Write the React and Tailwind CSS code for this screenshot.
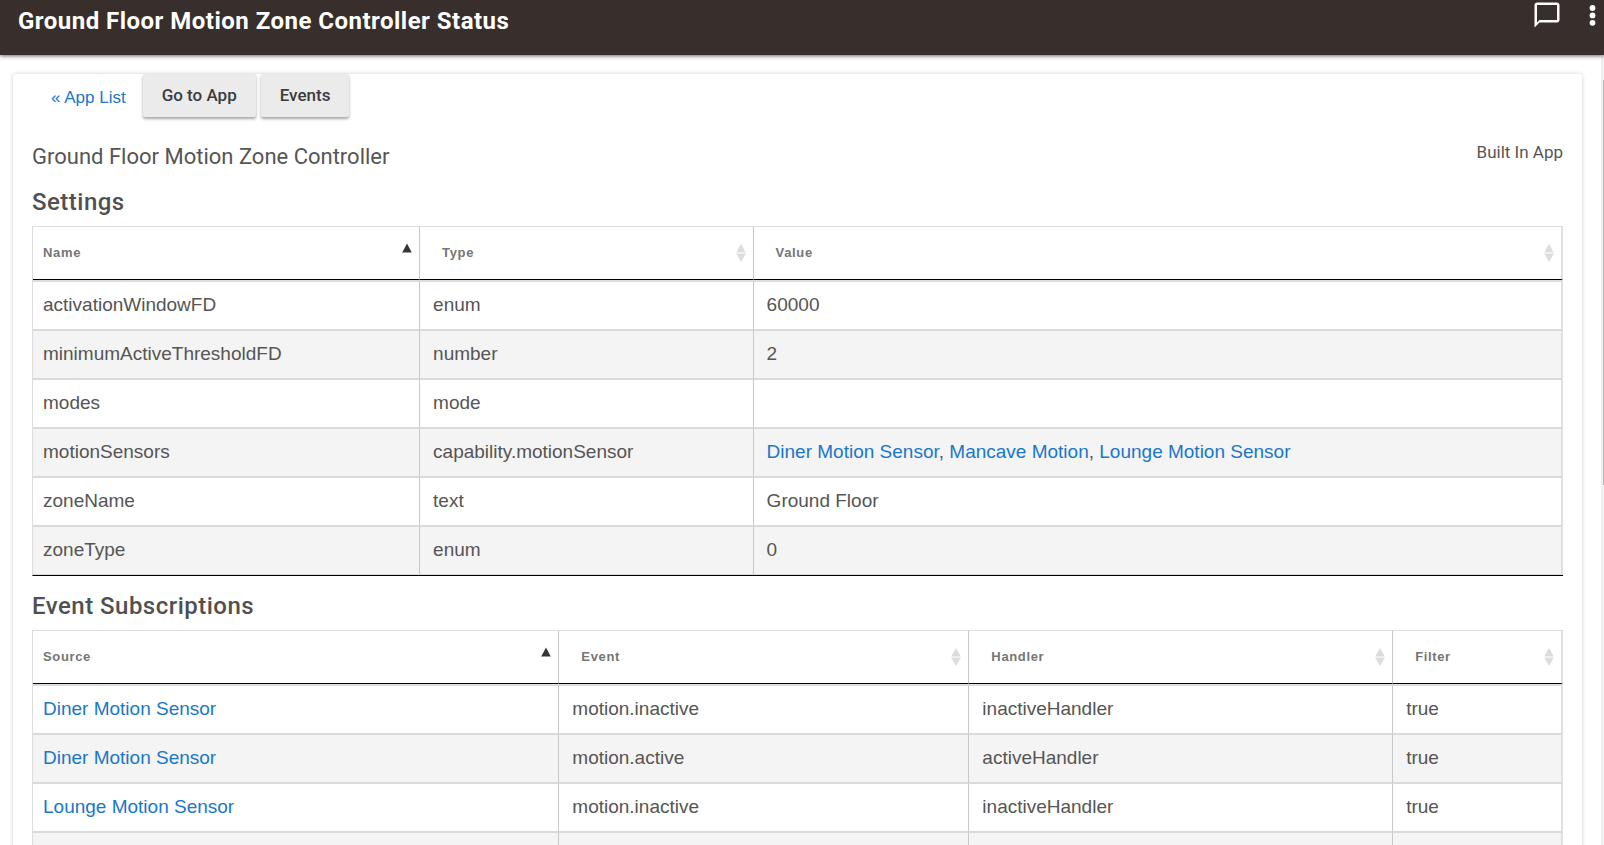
import { MdChatBubbleOutline } from "react-icons/md";

const settings = [
  { name: "activationWindowFD", type: "enum", value: "60000" },
  { name: "minimumActiveThresholdFD", type: "number", value: "2" },
  { name: "modes", type: "mode", value: "" },
  {
    name: "motionSensors",
    type: "capability.motionSensor",
    devices: ["Diner Motion Sensor", "Mancave Motion", "Lounge Motion Sensor"],
  },
  { name: "zoneName", type: "text", value: "Ground Floor" },
  { name: "zoneType", type: "enum", value: "0" },
];

const subscriptions = [
  { id: 1, source: "Diner Motion Sensor", event: "motion.inactive", handler: "inactiveHandler", filter: "true" },
  { id: 2, source: "Diner Motion Sensor", event: "motion.active", handler: "activeHandler", filter: "true" },
  { id: 3, source: "Lounge Motion Sensor", event: "motion.inactive", handler: "inactiveHandler", filter: "true" },
  { id: 4 },
];

const MoreIcon = () => (
  <svg width="22" height="30" viewBox="0 0 22 30" fill="currentColor" aria-hidden="true">
    <circle cx="10.5" cy="8" r="2.9" />
    <circle cx="10.5" cy="15.4" r="2.9" />
    <circle cx="10.5" cy="22.8" r="2.9" />
  </svg>
);

const SortIcon = ({ sorted }) => (
  <svg width="10" height="20" viewBox="0 0 10 20" aria-hidden="true">
    {sorted ? (
      <path d="M5 0.5 L9.8 9.5 H0.2 Z" fill="#32373b" />
    ) : (
      <path d="M5 1 L9.8 9.5 H0.2 Z M0.2 10.5 H9.8 L5 19 Z" fill="#dadddf" />
    )}
  </svg>
);

const HeadCell = ({ label, width, sorted }) => (
  <th
    scope="col"
    className={`${width} h-[53px] p-0 border-b border-b-black border-r border-r-[#c8c8c8] last:border-r-2 last:border-r-[#e0e0e0]`}
  >
    <button
      className={`w-full flex items-center justify-between pr-[7px] text-[13px] font-bold tracking-wider text-[#757575] ${sorted ? "pl-[10px]" : "pl-[22px]"}`}
    >
      {label}
      <SortIcon sorted={sorted} />
    </button>
  </th>
);

const Cell = ({ children }) => (
  <td className="h-[49px] group-first:h-[51px] group-last:h-12 group-first:border-t-2 border-t-[#dddddd] pt-0 pb-[2px] pl-[13px] first:pl-[10px] border-b-2 group-last:border-b border-b-[#dadada] border-r border-r-[#c8c8c8] last:border-r-2 last:border-r-[#e0e0e0]">
    {children}
  </td>
);

const Row = ({ children }) => (
  <tr className="group even:bg-[#f4f4f4]">{children}</tr>
);

const DeviceLink = ({ name }) => (
  <a href="#" className="text-[#1a77c9]">{name}</a>
);

const DataTable = ({ columns, children }) => (
  <table className="w-full table-fixed border-separate border-spacing-0 border-t border-l border-[#dddddd] border-b border-b-black text-left text-[19px] leading-5 text-[#555555]">
    <thead>
      <tr>
        {columns.map((column, i) => (
          <HeadCell key={column.label} {...column} sorted={i === 0} />
        ))}
      </tr>
    </thead>
    <tbody>{children}</tbody>
  </table>
);

const SectionTitle = ({ children }) => (
  <h3 className="mb-2 font-[Roboto,sans-serif] text-2xl font-medium tracking-[0.02em] text-[#505050]">{children}</h3>
);

const App = () => {
  return (
    <div className="h-screen flex flex-col overflow-hidden bg-white font-['Liberation_Sans',Arial,sans-serif]">
      <header className="h-[55px] shrink-0 z-10 flex items-start justify-between bg-[#382e2b] pl-[18px] text-white shadow-[0_1px_4px_rgba(0,0,0,0.6)]">
        <h1 className="pt-[5px] font-[Roboto,sans-serif] text-2xl font-bold tracking-[0.02em]">
          Ground Floor Motion Zone Controller Status
        </h1>
        <div className="flex items-center gap-5">
          <button aria-label="Messages"><MdChatBubbleOutline className="size-[30px]" /></button>
          <button aria-label="More options"><MoreIcon /></button>
        </div>
      </header>

      <div className="flex-1 min-h-0 flex">
        <main className="flex-1 min-w-0 overflow-hidden pt-[19px] pl-[13px] pr-[19px]">
          <div className="min-h-full rounded-sm px-[19px] shadow-[0_0_4px_rgba(0,0,0,0.2)]">
            {/* Navigation */}
            <nav className="flex gap-[5px] pl-[19px]">
              <a href="#" className="pt-3 pr-3 text-[17px] leading-6 text-[#1a77c9]">« App List</a>
              <button className="h-[43px] rounded-xs bg-[#ebebeb] px-[19px] font-[Roboto,sans-serif] text-[17px] font-medium text-[#3c3c3c] shadow-[0_2px_3px_rgba(0,0,0,0.35)]">
                Go to App
              </button>
              <button className="h-[43px] rounded-xs bg-[#ebebeb] px-[19px] font-[Roboto,sans-serif] text-[17px] font-medium text-[#3c3c3c] shadow-[0_2px_3px_rgba(0,0,0,0.35)]">
                Events
              </button>
            </nav>

            <div className="mt-6 flex items-start justify-between font-[Roboto,sans-serif] text-[#555555]">
              <h2 className="text-[22px] leading-8">Ground Floor Motion Zone Controller</h2>
              <p className="text-[17px] leading-[22px]">Built In App</p>
            </div>

            {/* Settings */}
            <section className="mt-[13px]">
              <SectionTitle>Settings</SectionTitle>
              <DataTable
                columns={[
                  { label: "Name", width: "w-[25.3%]" },
                  { label: "Type", width: "w-[21.8%]" },
                  { label: "Value", width: "w-[52.9%]" },
                ]}
              >
                {settings.map((row) => (
                  <Row key={row.name}>
                    <Cell>{row.name}</Cell>
                    <Cell>{row.type}</Cell>
                    <Cell>
                      {row.devices
                        ? row.devices.map((device, i) => (
                            <span key={device}>
                              {i > 0 && ", "}
                              <DeviceLink name={device} />
                            </span>
                          ))
                        : row.value}
                    </Cell>
                  </Row>
                ))}
              </DataTable>
            </section>

            {/* Event Subscriptions */}
            <section className="mt-[14px]">
              <SectionTitle>Event Subscriptions</SectionTitle>
              <DataTable
                columns={[
                  { label: "Source", width: "w-[34.4%]" },
                  { label: "Event", width: "w-[26.8%]" },
                  { label: "Handler", width: "w-[27.7%]" },
                  { label: "Filter", width: "w-[11.1%]" },
                ]}
              >
                {subscriptions.map((row) => (
                  <Row key={row.id}>
                    <Cell>{row.source && <DeviceLink name={row.source} />}</Cell>
                    <Cell>{row.event}</Cell>
                    <Cell>{row.handler}</Cell>
                    <Cell>{row.filter}</Cell>
                  </Row>
                ))}
              </DataTable>
            </section>
          </div>
        </main>

        {/* Scroll track */}
        <div className="w-[3px] pt-[25px] bg-[#f0f0f0]">
          <div className="ml-auto h-[53%] w-px bg-[#b5b5b5]" />
        </div>
      </div>
    </div>
  );
};

export default App;
